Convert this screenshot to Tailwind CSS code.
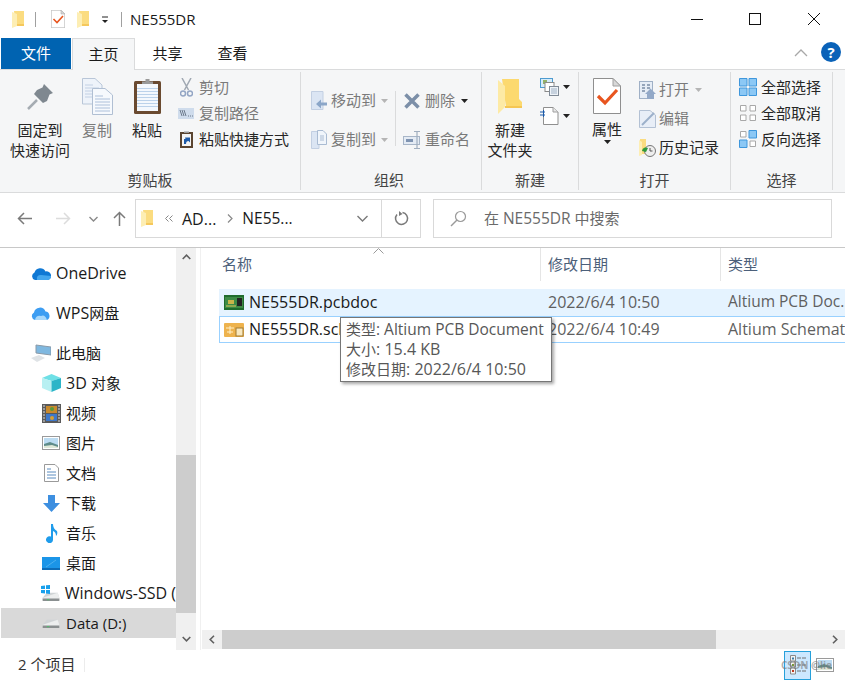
<!DOCTYPE html>
<html lang="zh-CN">
<head>
  <meta charset="UTF-8">
  <title>NE555DR</title>
  <script src="https://cdn.jsdelivr.net/npm/@tailwindcss/browser@4"></script>
</head>
<body class="bg-white">
<svg class="absolute w-0 h-0">
  <defs>
    <symbol id="folder" viewBox="0 0 12 17">
      <path d="M2 0H12V14.5H4Z" fill="#fbdc80"/>
      <path d="M0 1L5 3V15L0 17Z" fill="#fdeeb4"/>
      <path d="M5 13H12V15H5Z" fill="#f5c85c"/>
    </symbol>
    <symbol id="check-doc" viewBox="0 0 28 36">
      <path d="M.5.5H20L27.5 8V35.5H.5Z" fill="#fff" stroke="#8f8f8f"/>
      <path d="M20 .5V8H27.5Z" fill="#d8d8d8" stroke="#a0a0a0"/>
      <path d="M5 18L12 25L24 12" fill="none" stroke="#e8551f" stroke-width="3.2"/>
    </symbol>
    <symbol id="drive" viewBox="0 0 20 12">
      <path d="M5 2H18L20 8V11H0V8Z" fill="#d0d4d6"/>
      <path d="M0 8L18 2L20 8V11H0Z" fill="#eceeee"/>
      <path d="M0 9H20V12H0Z" fill="#8a8f90"/>
      <rect x="5" y="10" width="3" height="1" fill="#44cc66"/>
    </symbol>
    <symbol id="landscape" viewBox="0 0 18 14">
      <rect x=".5" y=".5" width="17" height="13" fill="#fff" stroke="#9a9a9a"/>
      <rect x="2" y="2" width="14" height="10" fill="#bcdcf2"/>
      <path d="M2 8L8 6L16 9V12H2Z" fill="#5f8c8a"/>
      <path d="M2 10L10 9L16 11V12H2Z" fill="#dfe8d8"/>
    </symbol>
  </defs>
</svg>

<div class="w-[845px] h-[680px] overflow-hidden flex flex-col text-[15px] text-[#1a1a1a] bg-white font-['Open_Sans','Noto_Sans_CJK_SC',sans-serif] relative">

  <!-- title bar -->
  <div class="h-[38px] flex items-center shrink-0">
    <svg class="ml-[12px] w-[12px] h-[17px]"><use href="#folder"/></svg>
    <div class="ml-[11px] w-px h-[15px] bg-[#a0a0a0]"></div>
    <svg class="ml-[15px] w-[14px] h-[18px]"><use href="#check-doc"/></svg>
    <svg class="ml-[12px] w-[12px] h-[17px]"><use href="#folder"/></svg>
    <svg class="ml-[12px] mt-[2px]" width="8" height="8" viewBox="0 0 8 8"><path d="M1 1H7" stroke="#222"/><path d="M1 4H7L4 7Z" fill="#222"/></svg>
    <div class="ml-[12px] w-px h-[15px] bg-[#a0a0a0]"></div>
    <div class="ml-[8px] text-[15px]">NE555DR</div>
    <div class="flex-1"></div>
    <svg class="mr-[46px]" width="12" height="12" viewBox="0 0 12 12"><path d="M0 6.5H12" stroke="#111"/></svg>
    <svg class="mr-[47px]" width="12" height="12" viewBox="0 0 12 12"><rect x=".5" y=".5" width="11" height="11" fill="none" stroke="#111"/></svg>
    <svg class="mr-[25px]" width="12" height="12" viewBox="0 0 12 12"><path d="M0 0L12 12M12 0L0 12" stroke="#111"/></svg>
  </div>

  <!-- tabs -->
  <div class="h-[32px] flex shrink-0 relative z-10">
    <div class="ml-px w-[70px] h-[31px] bg-[#0063b1] text-white flex items-center justify-center">文件</div>
    <div class="ml-px w-[63px] h-[32px] bg-[#f5f6f7] border border-b-0 border-[#dadbdc] flex items-center justify-center">主页</div>
    <div class="w-[65px] flex items-center justify-center pb-px">共享</div>
    <div class="w-[65px] flex items-center justify-center pb-px">查看</div>
    <div class="flex-1"></div>
    <svg class="mt-[10px] mr-[13px]" width="14" height="9" viewBox="0 0 14 9"><path d="M1 8L7 2L13 8" fill="none" stroke="#a8a8a8" stroke-width="1.3"/></svg>
    <svg class="mt-[4px] mr-[4px]" width="20" height="20" viewBox="0 0 20 20"><circle cx="10" cy="10" r="10" fill="#0a62b8"/><text x="10" y="15.5" text-anchor="middle" font-size="15" font-weight="700" fill="#fff" font-family="Open Sans">?</text></svg>
  </div>

  <!-- ribbon -->
  <div class="h-[124px] shrink-0 flex bg-[#f5f6f7] border-t border-b border-[#dadbdc] -mt-px text-[#262626]">

    <div class="w-[301px] my-[2px] border-r border-[#dadbdc] flex flex-col">
      <div class="flex-1 flex">
        <div class="ml-[10px] w-[60px] flex flex-col items-center leading-[20px]">
          <div class="h-[48px] flex items-center">
            <svg width="27" height="27" viewBox="0 0 27 27"><path d="M17 1L26 10L22.500 11.500L20 18L16 20L7 11L10 7L15.500 4.500Z" fill="#7f8890"/><path d="M10 17L1 26" stroke="#a5acb2" stroke-width="2.500"/></svg>
          </div>
          <div>固定到</div><div>快速访问</div>
        </div>
        <div class="ml-[10px] w-[34px] flex flex-col items-center leading-[20px] text-[#7a7a7a]">
          <div class="h-[48px] flex items-center">
            <svg width="31" height="37" viewBox="0 0 31 37"><path d="M.5.5H13L20 7V26H.5Z" fill="#eef3fa" stroke="#b9c6d8"/><path d="M3 7H11M3 10H17M3 13H17M3 16H17M3 19H17" stroke="#c2d0e4"/><path d="M10.500 10.500H23L30.500 17V36.500H10.500Z" fill="#f6f9fd" stroke="#b0bfd3"/><path d="M13 18H21M13 21H28M13 24H28M13 27H28M13 30H28M13 33H28" stroke="#adc0da"/></svg>
          </div>
          <div>复制</div>
        </div>
        <div class="ml-[13px] w-[40px] flex flex-col items-center leading-[20px]">
          <div class="h-[48px] flex items-center">
            <svg width="27" height="36" viewBox="0 0 27 36"><rect x="0" y="3" width="27" height="33" rx="1.500" fill="#6a4a30"/><rect x="3" y="6" width="21" height="27" fill="#f4f8fd"/><path d="M3 10.500H24M3 13.500H24M3 16.500H24M3 19.500H24M3 22.500H24M3 25.500H24M3 28.500H24" stroke="#bcd2ea"/><path d="M8 6V3.500H11.500V1H15.500V3.500H19V6Z" fill="#9a9a9a"/></svg>
          </div>
          <div>粘贴</div>
        </div>
        <div class="ml-[11px] pt-[2px] flex flex-col">
          <div class="h-[26px] flex items-center text-[#7a7a7a]">
            <svg class="ml-[2px] mr-[6px]" width="13" height="19" viewBox="0 0 13 19"><path d="M2 0L8.500 12M11 0L4.500 12" stroke="#a0a8b2" stroke-width="1.500"/><circle cx="3" cy="15.500" r="2.500" fill="none" stroke="#93a5c4" stroke-width="1.500"/><circle cx="10" cy="15.500" r="2.500" fill="none" stroke="#93a5c4" stroke-width="1.500"/></svg>
            剪切
          </div>
          <div class="h-[26px] flex items-center text-[#7a7a7a]">
            <svg class="mr-[5px]" width="16" height="11" viewBox="0 0 16 11"><rect width="16" height="11" fill="#cfdcec"/><path d="M2 2L4 8M4 2L6 8M6 2L8 8" stroke="#6c7a8c"/><path d="M10 8H11M12 8H13M14 8H15" stroke="#6c7a8c"/></svg>
            复制路径
          </div>
          <div class="h-[26px] flex items-center">
            <svg class="ml-[2px] mr-[6px]" width="13" height="18" viewBox="0 0 13 18"><rect y="2" width="13" height="16" fill="#5a4430"/><rect x="2" y="4" width="9" height="12" fill="#f4f4f4"/><path d="M4 1.500H9V3H4Z" fill="#999"/><path d="M4 14V9H5.500L5 7.500H10V12.500L8.500 11Q6 11 6 14Z" fill="#1d5aa8"/></svg>
            粘贴快捷方式
          </div>
        </div>
      </div>
      <div class="h-[22px] leading-[24px] text-center text-[#444]">剪贴板</div>
    </div>

    <div class="w-[181px] my-[2px] border-r border-[#dadbdc] flex flex-col">
      <div class="flex-1 flex">
        <div class="ml-[10px] w-[78px] pt-[9px] flex flex-col text-[#7a7a7a]">
          <div class="h-[39px] flex items-center">
            <svg class="mr-[4px]" width="16" height="19" viewBox="0 0 16 19"><path d="M.5.500H12V18.500H.5Z" fill="#dbe5f3" stroke="#c2cfe2"/><path d="M16 11.500H10V8.500L5 13L10 17.500V14.500H16Z" fill="#8ba6c8"/></svg>
            移动到
            <svg class="ml-[5px] mt-px" width="7" height="4" viewBox="0 0 7 4"><path d="M0 0H7L3.500 4Z" fill="#b5b5b5"/></svg>
          </div>
          <div class="h-[39px] flex items-center">
            <svg class="mr-[4px]" width="16" height="19" viewBox="0 0 16 19"><path d="M.5 1.500H8V18.500H.5Z" fill="#dbe5f3" stroke="#c2cfe2"/><path d="M6.500.500H12L15.500 4V14.500H6.500Z" fill="#f0f5fb" stroke="#a9bbd2"/><path d="M9 6H13M9 8H13M9 10H13" stroke="#a9bbd2"/></svg>
            复制到
            <svg class="ml-[5px] mt-px" width="7" height="4" viewBox="0 0 7 4"><path d="M0 0H7L3.500 4Z" fill="#b5b5b5"/></svg>
          </div>
        </div>
        <div class="ml-[6px] mt-[19px] w-px h-[55px] bg-[#dadbdc]"></div>
        <div class="pt-[9px] flex flex-col text-[#7a7a7a]">
          <div class="h-[39px] flex items-center">
            <svg class="ml-[8px] mr-[5px]" width="16" height="16" viewBox="0 0 16 16"><path d="M1.500 1.500L14.500 14.500M14.500 1.500L1.500 14.500" stroke="#7c8fa8" stroke-width="3.500"/></svg>
            删除
            <svg class="ml-[6px]" width="7" height="4" viewBox="0 0 7 4"><path d="M0 0H7L3.500 4Z" fill="#222"/></svg>
          </div>
          <div class="h-[39px] flex items-center">
            <svg class="ml-[7px] mr-[4px]" width="18" height="18" viewBox="0 0 18 18"><rect x=".5" y="5.500" width="16" height="8" fill="#e4ebf4" stroke="#a8b6c8"/><rect x="3" y="8" width="7" height="3" fill="#7f94b2"/><path d="M11 .5H17M14 .5V17.500M11 17.500H17" stroke="#a0aebf" stroke-width="1.200"/></svg>
            重命名
          </div>
        </div>
      </div>
      <div class="h-[22px] leading-[24px] text-center text-[#444] pr-[4px]">组织</div>
    </div>

    <div class="w-[97px] my-[2px] border-r border-[#dadbdc] flex flex-col">
      <div class="flex-1 flex">
        <div class="ml-[3px] w-[50px] flex flex-col items-center leading-[20px]">
          <div class="h-[48px] flex items-center">
            <svg width="24" height="35" viewBox="0 0 24 35"><path d="M4 0H21V20L24 23V28H8Z" fill="#fcd96f"/><path d="M0 1L7 7V28L0 35Z" fill="#fdeaa5"/><path d="M7 27H24V29H7Z" fill="#f5c653"/></svg>
          </div>
          <div>新建</div><div>文件夹</div>
        </div>
        <div class="ml-[5px] pt-[6px] flex flex-col gap-[11px]">
          <div class="flex items-center gap-[4px] h-[18px]">
            <svg width="19" height="18" viewBox="0 0 19 18"><rect x=".5" y=".5" width="12" height="9" fill="#d6ecfa" stroke="#4d9bd0"/><rect x="3" y="2" width="4" height="4" fill="#94b268"/><rect x="5" y="4.500" width="9" height="9" fill="#fff" stroke="#8a8a8a"/><rect x="9.500" y="8.500" width="9" height="9" fill="#eef3f8" stroke="#808a96"/><path d="M11 11H17M11 13H17M11 15H17" stroke="#9fb0c4"/></svg>
            <svg width="7" height="4" viewBox="0 0 7 4"><path d="M0 0H7L3.500 4Z" fill="#222"/></svg>
          </div>
          <div class="flex items-center gap-[4px] h-[18px]">
            <svg width="19" height="18" viewBox="0 0 19 18"><path d="M3.500.5H13L18 5V17.500H3.500Z" fill="#fff" stroke="#8f8f8f"/><path d="M13 .5V5H18" fill="#e8e8e8" stroke="#9f9f9f"/><path d="M0 5H5M0 8H5" stroke="#1d5aa8"/><path d="M3.500 3V10" stroke="#1d5aa8"/></svg>
            <svg width="7" height="4" viewBox="0 0 7 4"><path d="M0 0H7L3.500 4Z" fill="#222"/></svg>
          </div>
        </div>
      </div>
      <div class="h-[22px] leading-[24px] text-center text-[#444]">新建</div>
    </div>

    <div class="w-[152px] my-[2px] border-r border-[#dadbdc] flex flex-col">
      <div class="flex-1 flex">
        <div class="ml-[8px] w-[40px] flex flex-col items-center leading-[20px] relative">
          <div class="h-[47px] flex items-center">
            <svg width="28" height="36"><use href="#check-doc"/></svg>
          </div>
          <div>属性</div>
          <svg class="mt-[1px]" width="7" height="4" viewBox="0 0 7 4"><path d="M0 0H7L3.500 4Z" fill="#222"/></svg>
        </div>
        <div class="ml-[12px] pt-[3px] flex flex-col">
          <div class="h-[29px] flex items-center text-[#7a7a7a]">
            <svg class="mr-[3px]" width="17" height="18" viewBox="0 0 17 18"><rect x=".5" y=".5" width="13" height="17" fill="#e6edf6" stroke="#9fb0c6"/><path d="M3 4H6M8 4H11M3 7H6M8 7H11M3 10H6" stroke="#7b8da6" stroke-width="1.500"/><path d="M11.500 7.500L17 13H15V18H8V13H6Z" fill="#93a9c8"/></svg>
            打开
            <svg class="ml-[6px] mt-px" width="7" height="4" viewBox="0 0 7 4"><path d="M0 0H7L3.500 4Z" fill="#b5b5b5"/></svg>
          </div>
          <div class="h-[29px] flex items-center text-[#7a7a7a]">
            <svg class="mr-[3px]" width="17" height="18" viewBox="0 0 17 18"><path d="M.5.5H11L16.500 5V17.500H.5Z" fill="#e8eef7" stroke="#b3c1d4"/><path d="M3 15L15 3" stroke="#9cb0ca" stroke-width="2"/></svg>
            编辑
          </div>
          <div class="h-[29px] flex items-center">
            <svg class="mr-[3px]" width="17" height="18" viewBox="0 0 17 18"><path d="M1 0H7V15H1Z" fill="#fbdc80"/><path d="M0 1L3 3V16L0 17Z" fill="#fdeeb4"/><circle cx="11" cy="12" r="5.500" fill="#eee" stroke="#777"/><path d="M11 9V12H13.500" stroke="#555" fill="none"/><path d="M3 12A4 4 0 0 1 9 9L7 13Z" fill="#2f9a3a"/></svg>
            历史记录
          </div>
        </div>
      </div>
      <div class="h-[22px] leading-[24px] text-center text-[#444]">打开</div>
    </div>

    <div class="w-[102px] my-[2px] border-r border-[#dadbdc] flex flex-col">
      <div class="flex-1 flex flex-col pt-[2px] pl-[8px]">
        <div class="h-[26px] flex items-center gap-[4px]">
          <svg width="18" height="18" viewBox="0 0 18 18"><path d="M.5.5H8V8H.5ZM10 .5H17.500V8H10ZM.5 10H8V17.500H.5ZM10 10H17.500V17.500H10Z" fill="#8cc8f5" stroke="#3f97dc"/></svg>
          全部选择
        </div>
        <div class="h-[26px] flex items-center gap-[4px]">
          <svg width="18" height="18" viewBox="0 0 18 18"><path d="M1.500 1.500H7V7H1.500ZM11 1.500H16.500V7H11ZM1.500 11H7V16.500H1.500ZM11 11H16.500V16.500H11Z" fill="#fff" stroke="#a8a8a8"/></svg>
          全部取消
        </div>
        <div class="h-[26px] flex items-center gap-[4px]">
          <svg width="18" height="18" viewBox="0 0 18 18"><path d="M1.500 1.500H7V7H1.500ZM11 11H16.500V16.500H11Z" fill="#fff" stroke="#a8a8a8"/><path d="M10 .5H17.500V8H10ZM.5 10H8V17.500H.5Z" fill="#8cc8f5" stroke="#3f97dc"/></svg>
          反向选择
        </div>
      </div>
      <div class="h-[22px] leading-[24px] text-center text-[#444]">选择</div>
    </div>
  </div>

  <!-- address row -->
  <div class="h-[55px] shrink-0 flex items-center border-b border-[#c8c8c8] pb-[3px]">
    <svg class="ml-[17px]" width="15" height="13" viewBox="0 0 15 13"><path d="M15 6.500H1.500M7 1L1.500 6.500L7 12" fill="none" stroke="#7a7a7a" stroke-width="1.500"/></svg>
    <svg class="ml-[24px]" width="15" height="13" viewBox="0 0 15 13"><path d="M0 6.500H13.500M8 1L13.500 6.500L8 12" fill="none" stroke="#dcdcdc" stroke-width="1.500"/></svg>
    <svg class="ml-[18px]" width="9" height="6" viewBox="0 0 9 6"><path d="M.5 1L4.500 5L8.500 1" fill="none" stroke="#8a8a8a" stroke-width="1.400"/></svg>
    <svg class="ml-[15px]" width="13" height="15" viewBox="0 0 13 15"><path d="M6.500 15V1.500M1 7L6.500 1.500L12 7" fill="none" stroke="#7a7a7a" stroke-width="1.500"/></svg>
    <div class="ml-[9px] w-[286px] h-[39px] border border-[#d9d9d9] flex items-center">
      <svg class="ml-[5px] w-[12px] h-[17px]"><use href="#folder"/></svg>
      <svg class="ml-[12px]" width="8" height="7" viewBox="0 0 8 7"><path d="M3.500.5L.5 3.500L3.500 6.500M7.500.5L4.500 3.500L7.500 6.500" fill="none" stroke="#888"/></svg>
      <span class="ml-[9px] text-[16px]">AD...</span>
      <svg class="ml-[11px]" width="6" height="9" viewBox="0 0 6 9"><path d="M1 .5L5 4.500L1 8.500" fill="none" stroke="#888" stroke-width="1.200"/></svg>
      <span class="ml-[9px] text-[15.5px]">NE55...</span>
      <div class="flex-1"></div>
      <svg class="mr-[13px]" width="11" height="7" viewBox="0 0 11 7"><path d="M.5 1L5.500 6L10.500 1" fill="none" stroke="#7a7a7a" stroke-width="1.400"/></svg>
      <div class="w-[39px] h-full border-l border-[#d9d9d9] flex items-center justify-center">
        <svg width="15" height="15" viewBox="0 0 15 15"><path d="M8.500 1.500A6 6 0 1 1 3 3.500" fill="none" stroke="#7a7a7a" stroke-width="1.500"/><path d="M8 0V5L4.500 2Z" fill="#7a7a7a" transform="rotate(180 6.500 2.500)"/></svg>
      </div>
    </div>
    <div class="ml-[12px] w-[399px] h-[39px] border border-[#d9d9d9] flex items-center text-[#6a6a6a]">
      <svg class="ml-[16px]" width="17" height="17" viewBox="0 0 17 17"><circle cx="10.500" cy="6.500" r="5" fill="none" stroke="#9a9a9a" stroke-width="1.200"/><path d="M7 10L1 16" stroke="#9a9a9a" stroke-width="1.500"/></svg>
      <span class="ml-[17px]">在 <span class="text-[15.5px]">NE555DR</span> 中搜索</span>
    </div>
  </div>

  <!-- body -->
  <div class="flex-1 flex min-h-0">
    <div class="w-[176px] shrink-0 flex flex-col pt-[10px] overflow-hidden">
      <div class="h-[30px] flex items-center pl-[31px]">
        <svg class="mr-[5px]" width="20" height="13" viewBox="0 0 20 13"><path d="M4 13A4 4 0 0 1 3.500 5.500A6 6 0 0 1 14.500 4.500A4.500 4.500 0 0 1 20 10Q19 13 16 13Z" fill="#0f78d4"/><path d="M6 13Q5 8 10 8L20 9Q20 13 16 13Z" fill="#43a6ee"/></svg>
        <span class="text-[16px]">OneDrive</span>
      </div>
      <div class="h-[10px]"></div>
      <div class="h-[30px] flex items-center pl-[31px]">
        <svg class="mr-[5px]" width="20" height="13" viewBox="0 0 20 13"><path d="M4 13A4 4 0 0 1 3 5.500A6 6 0 0 1 14.500 4.500A4.500 4.500 0 0 1 16 13Z" fill="#3c9df2"/><path d="M4 13Q5 8 10 9Q14 7 16 13Z" fill="#a8d8fb"/></svg>
        <span><span class="text-[16px]">WPS</span>网盘</span>
      </div>
      <div class="h-[10px]"></div>
      <div class="h-[30px] flex items-center pl-[31px]">
        <svg class="mr-[5px]" width="20" height="18" viewBox="0 0 20 18"><path d="M5 1L20 3V11L5 9Z" fill="#7fb8e0" stroke="#8a9aa8"/><path d="M0 14L8 11L14 14L6 18Z" fill="#dfe3e6"/></svg>
        此电脑
      </div>
      <div class="h-[30px] flex items-center pl-[42px]">
        <svg class="mr-[5px]" width="19" height="18" viewBox="0 0 19 18"><path d="M0 4L9.500 0L19 4L9.500 7Z" fill="#6fe0e6"/><path d="M0 4L9.500 7V18L0 14Z" fill="#b8f0f2"/><path d="M19 4L9.500 7V18L19 14Z" fill="#2cb5c8"/></svg>
        <span><span class="text-[16px]">3D </span>对象</span>
      </div>
      <div class="h-[30px] flex items-center pl-[42px]">
        <svg class="mr-[5px]" width="19" height="19" viewBox="0 0 19 19"><rect width="19" height="19" fill="#5a5a5a"/><path d="M1 2H3M1 5H3M1 8H3M1 11H3M1 14H3M1 17H3M16 2H18M16 5H18M16 8H18M16 11H18M16 14H18M16 17H18" stroke="#ddd"/><rect x="4" y="2" width="11" height="7" fill="#c98a2c"/><rect x="4" y="10" width="11" height="7" fill="#3f78c8"/><circle cx="10" cy="5" r="2" fill="#5a9a3a"/><circle cx="10" cy="14" r="2" fill="#d8a030"/></svg>
        视频
      </div>
      <div class="h-[30px] flex items-center pl-[42px]">
        <svg class="mr-[5px]" width="18" height="14"><use href="#landscape"/></svg>
        <span class="ml-px">图片</span>
      </div>
      <div class="h-[30px] flex items-center pl-[44px]">
        <svg class="mr-[7px]" width="15" height="18" viewBox="0 0 15 18"><path d="M.5.5H11L14.500 4V17.500H.5Z" fill="#fff" stroke="#9a9a9a"/><path d="M3 5H7M3 8H12M3 11H12M3 14H12" stroke="#5a8cc0"/></svg>
        文档
      </div>
      <div class="h-[30px] flex items-center pl-[43px]">
        <svg class="mr-[5px]" width="17" height="17" viewBox="0 0 17 17"><path d="M5 0H12V8H17L8.500 17L0 8H5Z" fill="#3d8fe0"/></svg>
        <span class="ml-px">下载</span>
      </div>
      <div class="h-[30px] flex items-center pl-[45px]">
        <svg class="mr-[8px]" width="13" height="19" viewBox="0 0 13 19"><path d="M6 0H8Q8 5 12 7Q13 10 11 12Q11 8 8 7V15.500A3.500 3.500 0 1 1 6 12.500Z" fill="#1f9ceb"/></svg>
        音乐
      </div>
      <div class="h-[30px] flex items-center pl-[42px]">
        <svg class="mr-[6px]" width="18" height="13" viewBox="0 0 18 13"><rect width="18" height="13" fill="#1b95e8"/><path d="M0 11H18V13H0Z" fill="#0d6cb8"/><path d="M4 10L14 3" stroke="#4cb0f0"/></svg>
        桌面
      </div>
      <div class="h-[30px] flex items-center pl-[41px]">
        <div class="relative mr-[5px] w-[20px] h-[16px]">
          <svg class="absolute left-[1px] bottom-0" width="18" height="10"><use href="#drive"/></svg>
          <svg class="absolute left-0 top-0" width="9" height="9" viewBox="0 0 9 9"><path d="M0 1L4 .5V4H0ZM5 .3L9 0V4H5ZM0 5H4V8.500L0 8ZM5 5H9V9L5 8.500Z" fill="#19a0ec"/></svg>
        </div>
        <span class="whitespace-nowrap text-[16px]">Windows-SSD (</span>
      </div>
      <div class="h-[30px] ml-px flex items-center pl-[41px] bg-[#d9d9d9]">
        <svg class="mr-[6px]" width="18" height="10"><use href="#drive"/></svg>
        <span class="whitespace-nowrap">Data (D:)</span>
      </div>
    </div>

    <!-- sidebar scrollbar -->
    <div class="w-[20px] shrink-0 bg-[#f0f0f0] flex flex-col">
      <div class="h-[17px] flex items-center justify-center">
        <svg width="9" height="6" viewBox="0 0 9 6"><path d="M.7 5L4.500 1.200L8.300 5" fill="none" stroke="#606060" stroke-width="1.600"/></svg>
      </div>
      <div class="h-[190px]"></div>
      <div class="h-[158px] bg-[#cdcdcd]"></div>
      <div class="flex-1 flex items-end justify-center pb-[8px]">
        <svg width="9" height="6" viewBox="0 0 9 6"><path d="M.7 1L4.500 4.800L8.300 1" fill="none" stroke="#606060" stroke-width="1.600"/></svg>
      </div>
    </div>
    <div class="w-[5px] shrink-0 border-r border-[#f0f0f0]"></div>

    <!-- file list -->
    <div class="flex-1 min-w-0 flex flex-col relative">
      <div class="h-[33px] shrink-0 flex text-[#4c607a]">
        <div class="w-[340px] pl-[21px] border-r border-[#e5e5e5] flex items-center">名称</div>
        <div class="w-[180px] pl-[7px] border-r border-[#e5e5e5] flex items-center">修改日期</div>
        <div class="pl-[7px] flex items-center">类型</div>
      </div>
      <svg class="absolute left-[172px] top-[0px]" width="11" height="6" viewBox="0 0 11 6"><path d="M.5 5.500L5.500 .5L10.500 5.500" fill="none" stroke="#9a9a9a"/></svg>

      <div class="h-[8px] shrink-0"></div>
      <div class="ml-[18px] -mr-[6px] h-[27px] shrink-0 bg-[#e5f3ff] flex items-center whitespace-nowrap overflow-hidden text-[16px]">
        <svg class="ml-[5px] shrink-0" width="20" height="15" viewBox="0 0 20 15"><rect width="20" height="15" fill="#1f6b2d"/><rect x="1" y="2" width="18" height="11" fill="#3d8a45"/><rect x="13" y="3" width="5" height="8" fill="#222"/><rect x="4" y="5" width="6" height="4" fill="#c9b44a"/><path d="M2 11H12" stroke="#e0c85a"/></svg>
        <span class="ml-[5px] mb-px w-[299px] shrink-0">NE555DR.pcbdoc</span>
        <span class="w-[180px] mb-px shrink-0 text-[#5f5f5f]">2022/6/4 10:50</span>
        <span class="mb-px text-[15.5px] text-[#5f5f5f]">Altium PCB Doc...</span>
      </div>
      <div class="ml-[18px] -mr-[6px] h-[27px] shrink-0 border border-[#99d1ff] flex items-center whitespace-nowrap overflow-hidden text-[16px]">
        <svg class="ml-[4px] shrink-0" width="20" height="14" viewBox="0 0 20 14"><rect width="20" height="14" rx="1" fill="#eeb34e"/><path d="M2 5H10M6 3V11M3 9H9" stroke="#fff0c8"/><rect x="12" y="5" width="7" height="8" fill="#f8e8c0" stroke="#a07a30"/></svg>
        <span class="ml-[5px] mb-px w-[299px] shrink-0">NE555DR.schdoc</span>
        <span class="w-[180px] mb-px shrink-0 text-[#5f5f5f]">2022/6/4 10:49</span>
        <span class="mb-px text-[#5f5f5f]">Altium Schematic</span>
      </div>

      <div class="flex-1"></div>
      <!-- horizontal scrollbar -->
      <div class="h-[19px] shrink-0 mb-[1px] ml-px bg-[#f0f0f0] flex items-center">
        <div class="w-[20px] flex justify-center">
          <svg width="6" height="9" viewBox="0 0 6 9"><path d="M5 .7L1.200 4.500L5 8.300" fill="none" stroke="#606060" stroke-width="1.600"/></svg>
        </div>
        <div class="w-[494px] h-full bg-[#cdcdcd]"></div>
        <div class="flex-1"></div>
        <div class="w-[20px] flex justify-center">
          <svg width="6" height="9" viewBox="0 0 6 9"><path d="M1 .7L4.800 4.500L1 8.300" fill="none" stroke="#606060" stroke-width="1.600"/></svg>
        </div>
      </div>
    </div>
  </div>

  <!-- status bar -->
  <div class="h-[30px] shrink-0 flex items-center text-[#333]">
    <span class="ml-[18px] mb-[2px]">2 个项目</span>
    <div class="ml-[9px] w-px h-[14px] bg-[#ececec]"></div>
    <div class="flex-1"></div>
    <div class="w-[27px] h-[29px] bg-[#cce8ff] border border-[#26a0da] flex items-center justify-center">
      <svg width="16" height="22" viewBox="0 0 16 22"><path d="M.5 1.500H5.500V7H.5ZM.5 8H5.500V13H.5ZM.5 14H5.500V20H.5Z" fill="#f4f4f4" stroke="#8a8a8a"/><rect x="2" y="3.500" width="2" height="2" fill="#3a7ca8"/><rect x="2" y="10" width="2" height="2" fill="#7a9a30"/><rect x="2" y="16" width="2" height="2" fill="#c03a20"/><path d="M7 4H11M12 4H16M7 11H11M12 11H16M7 17H11M12 17H16" stroke="#707070"/></svg>
    </div>
    <svg class="ml-[5px] mr-[11px]" width="18" height="14"><use href="#landscape"/></svg>
  </div>

  <!-- tooltip -->
  <div class="absolute left-[340px] top-[317px] w-[212px] h-[65px] bg-white border border-[#767676] shadow-[2px_2px_3px_rgba(0,0,0,0.35)] pl-[5px] pt-[1px] text-[#575757] text-[15px] leading-[20px] whitespace-nowrap">
    <div>类型<span class="text-[15.5px]">: Altium PCB Document</span></div>
    <div>大小<span class="text-[16px]">: 15.4 KB</span></div>
    <div>修改日期<span class="text-[16px]">: 2022/6/4 10:50</span></div>
  </div>

  <!-- watermark -->
  <div class="absolute left-[781px] top-[658px] text-[10px] font-bold text-[#777]/60 whitespace-nowrap">CSDN @lie</div>
</div>
</body>
</html>
